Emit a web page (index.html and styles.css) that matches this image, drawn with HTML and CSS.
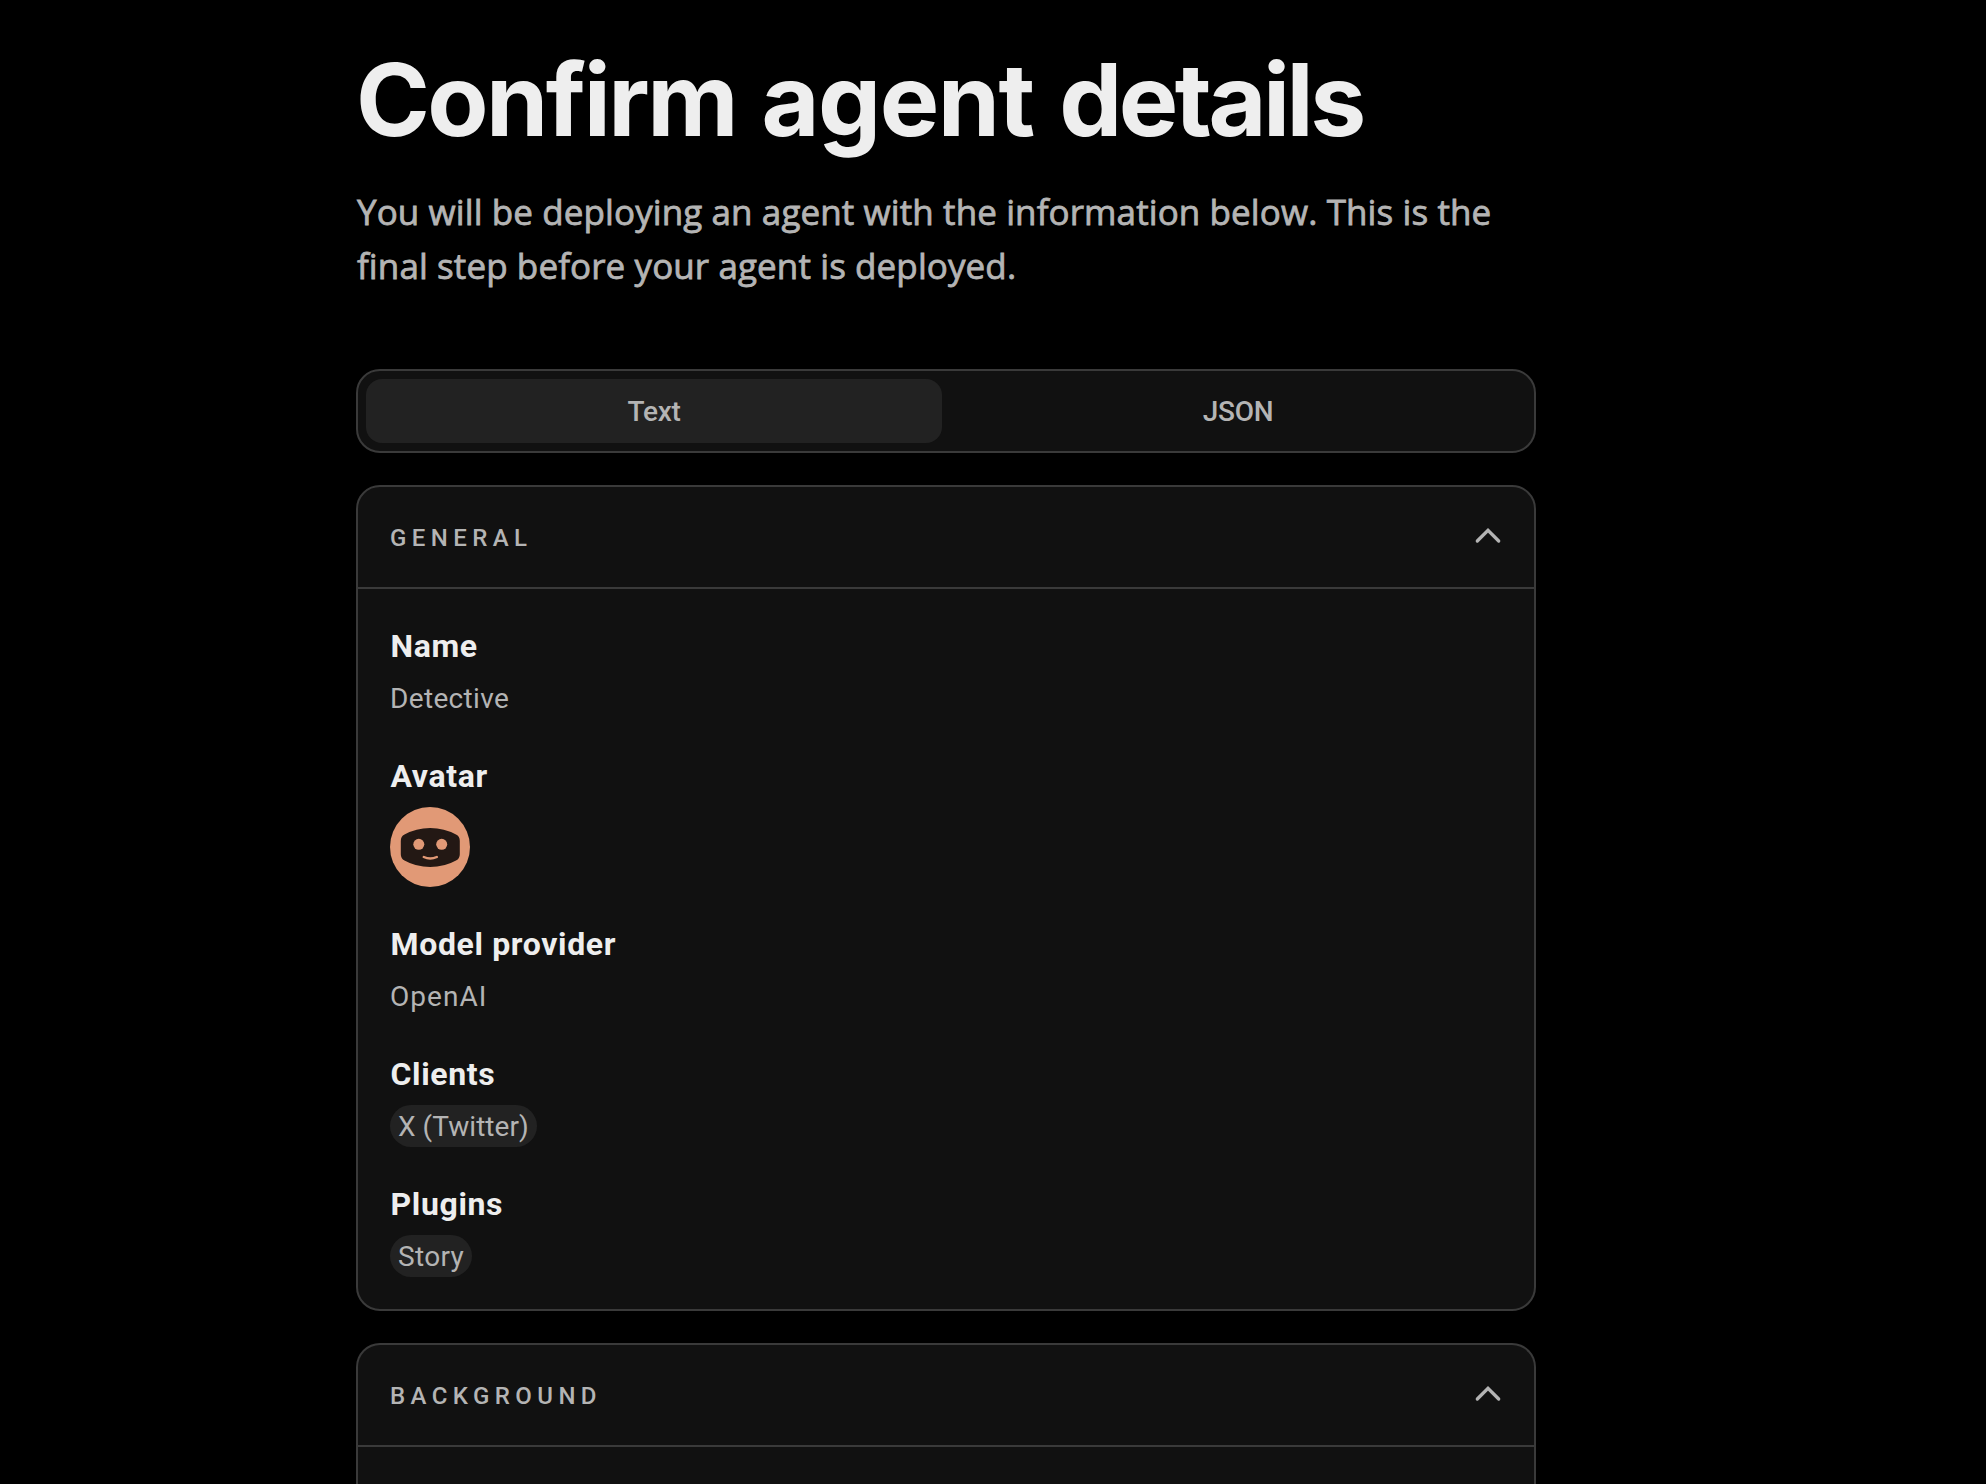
FILE: index.html
```html
<!DOCTYPE html>
<html lang="en">
<head>
<meta charset="utf-8">
<title>Confirm agent details</title>
<link rel="stylesheet" href="styles.css">
</head>
<body>
<main class="page">
  <h1 class="title">Confirm <span class="title-loose">agent</span> <span class="title-tight">details</span></h1>
  <p class="intro">You will be deploying an agent with the information below. This is the<br>final step before your agent is deployed.</p>

  <div class="tabs" role="tablist">
    <button class="tab tab-active" role="tab" aria-selected="true">Text</button>
    <button class="tab" role="tab" aria-selected="false">JSON</button>
  </div>

  <section class="card">
    <header class="card-header">
      <h2 class="card-title">General</h2>
      <svg class="chevron" viewBox="0 0 28 28"><path d="M3.3 18 14 7.3 24.7 18"/></svg>
    </header>
    <dl class="fields">
      <div class="field">
        <dt class="label">Name</dt>
        <dd class="value">Detective</dd>
      </div>
      <div class="field">
        <dt class="label">Avatar</dt>
        <dd class="value value-avatar">
          <svg class="avatar" viewBox="0 0 80 80">
            <circle cx="40" cy="40" r="40" fill="#e19976"/>
            <path d="M10.8 34Q10.8 29.5 14.5 27.6Q26 21 40.2 21Q54.4 21 66 27.6Q69.8 29.5 69.8 34V47.2Q69.8 51.5 66 53.5Q54.4 60 40.2 60Q26 60 14.5 53.5Q10.8 51.5 10.8 47.2Z" fill="#231814"/>
            <circle cx="28.8" cy="37.3" r="5.5" fill="#e19976"/>
            <circle cx="51.7" cy="37.3" r="5.5" fill="#e19976"/>
            <path d="M33.8 50Q40.2 53.2 46.8 50" fill="none" stroke="#e19976" stroke-width="2.5" stroke-linecap="round"/>
          </svg>
        </dd>
      </div>
      <div class="field">
        <dt class="label">Model provider</dt>
        <dd class="value value-model">OpenAI</dd>
      </div>
      <div class="field">
        <dt class="label">Clients</dt>
        <dd class="value"><span class="chip chip-client">X (Twitter)</span></dd>
      </div>
      <div class="field">
        <dt class="label">Plugins</dt>
        <dd class="value"><span class="chip">Story</span></dd>
      </div>
    </dl>
  </section>

  <section class="card card-open">
    <header class="card-header">
      <h2 class="card-title">Background</h2>
      <svg class="chevron" viewBox="0 0 28 28"><path d="M3.3 18 14 7.3 24.7 18"/></svg>
    </header>
  </section>
</main>
</body>
</html>
```

FILE: styles.css
```css
* { box-sizing: border-box; }

body {
  margin: 0;
  background: #000;
  color: #b4b4b4;
  font-family: Roboto, "Liberation Sans", sans-serif;
}

.page {
  display: flex;
  flex-direction: column;
  width: 1180px;
  height: 1484px;
  margin-left: 356px;
  padding-top: 50px;
}

.title {
  margin: 0;
  color: #eee;
  font: 700 100px/100px Inter, sans-serif;
  letter-spacing: -2.6px;
  word-spacing: 4.5px;
  white-space: nowrap;
}

.title-loose { letter-spacing: -1.5px; }

.title-tight { letter-spacing: -3.5px; }

.intro {
  margin: 35px 0 76px;
  padding-left: 1px;
  font: 400 35px/54px "Open Sans", sans-serif;
  letter-spacing: 0.1px;
  -webkit-text-stroke: 0.8px #b4b4b4;
  white-space: nowrap;
}

.tabs {
  display: grid;
  grid-template-columns: 1fr 1fr;
  gap: 8px;
  height: 84px;
  padding: 8px;
  border: 2px solid #3a3a3a;
  border-radius: 24px;
  background: #111;
}

.tab {
  padding: 2px 0 0;
  border: 0;
  border-radius: 16px;
  background: transparent;
  color: inherit;
  font: 500 28px/62px Roboto, sans-serif;
  letter-spacing: -0.27px;
}

.tab-active { background: #222; }

.card {
  margin-top: 32px;
  border: 2px solid #3a3a3a;
  border-radius: 24px;
  background: #111;
}

.card-open {
  flex: 1;
  border-bottom: 0;
  border-radius: 24px 24px 0 0;
}

.card-header {
  display: flex;
  align-items: center;
  justify-content: space-between;
  height: 102px;
  padding: 0 32px;
  border-bottom: 2px solid #3a3a3a;
}

.card-title {
  margin: 1px 0 0;
  font-size: 24px;
  font-weight: 500;
  line-height: 32px;
  letter-spacing: 5.42px;
  text-transform: uppercase;
}

.chevron {
  width: 28px;
  height: 28px;
  margin-bottom: 1px;
  fill: none;
  stroke: #b4b4b4;
  stroke-width: 3.3;
  stroke-linecap: round;
}

.fields {
  display: flex;
  flex-direction: column;
  gap: 32px;
  margin: 0;
  padding: 32px;
}

.label {
  padding: 1px 0 0 0.5px;
  color: #eee;
  font-size: 32px;
  font-weight: 700;
  line-height: 48px;
  letter-spacing: 0.65px;
}

.value {
  height: 42px;
  margin: 7px 0 0;
  font-size: 28px;
  line-height: 44px;
  letter-spacing: 0.34px;
}

.value-avatar { height: 80px; }

.value-model { letter-spacing: 1.05px; }

.avatar {
  display: block;
  width: 80px;
  height: 80px;
}

.chip {
  display: inline-block;
  height: 42px;
  padding: 0 8px;
  border-radius: 21px;
  background: #222;
}

.chip-client { letter-spacing: 0.05px; }
```
